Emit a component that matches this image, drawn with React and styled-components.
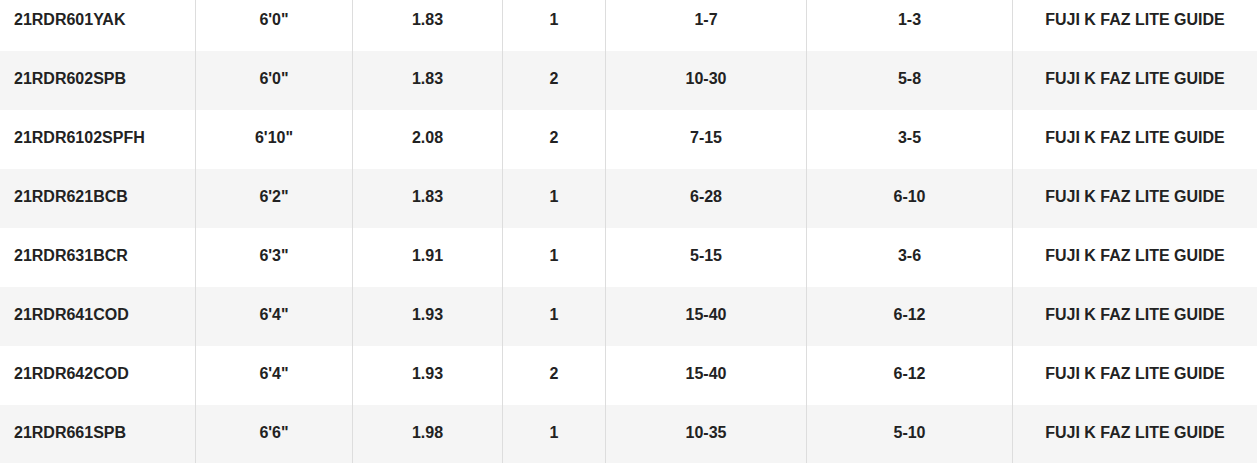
import React from 'react'
import styled, { createGlobalStyle } from 'styled-components'

const rods = [
  ['21RDR601YAK', '6\'0"', '1.83', '1', '1-7', '1-3', 'FUJI K FAZ LITE GUIDE'],
  ['21RDR602SPB', '6\'0"', '1.83', '2', '10-30', '5-8', 'FUJI K FAZ LITE GUIDE'],
  ['21RDR6102SPFH', '6\'10"', '2.08', '2', '7-15', '3-5', 'FUJI K FAZ LITE GUIDE'],
  ['21RDR621BCB', '6\'2"', '1.83', '1', '6-28', '6-10', 'FUJI K FAZ LITE GUIDE'],
  ['21RDR631BCR', '6\'3"', '1.91', '1', '5-15', '3-6', 'FUJI K FAZ LITE GUIDE'],
  ['21RDR641COD', '6\'4"', '1.93', '1', '15-40', '6-12', 'FUJI K FAZ LITE GUIDE'],
  ['21RDR642COD', '6\'4"', '1.93', '2', '15-40', '6-12', 'FUJI K FAZ LITE GUIDE'],
  ['21RDR661SPB', '6\'6"', '1.98', '1', '10-35', '5-10', 'FUJI K FAZ LITE GUIDE'],
]

const App = () => {
  return (
    <>
      <GlobalStyle />
      <SpecTable>
        {rods.map((row, i) => (
          <Row key={row[0]} $striped={i % 2 === 1}>
            {row.map((val, j) => (
              <Cell key={j} $first={j === 0}>{val}</Cell>
            ))}
          </Row>
        ))}
      </SpecTable>
    </>
  )
}

const GlobalStyle = createGlobalStyle`
  body {
    margin: 0;
    background: #ffffff;
    font-family: 'Liberation Sans', Arial, sans-serif;
  }
`

const SpecTable = styled.div`
  margin-top: -8px;
  display: flex;
  flex-direction: column;
`

const Row = styled.div`
  display: grid;
  grid-template-columns: 195px 157px 150px 103px 201px 206px 1fr;
  height: 59px;
  background: ${props => props.$striped ? '#f5f5f5' : '#ffffff'};
`

const Cell = styled.div`
  display: flex;
  align-items: center;
  justify-content: ${props => props.$first ? 'flex-start' : 'center'};
  padding-left: ${props => props.$first ? '14px' : '0'};
  padding-bottom: 3px;
  border-left: ${props => props.$first ? 'none' : '1px solid #dddddd'};
  color: #222222;
  font-size: 16px;
  font-weight: 700;
  white-space: nowrap;
`

export default App
